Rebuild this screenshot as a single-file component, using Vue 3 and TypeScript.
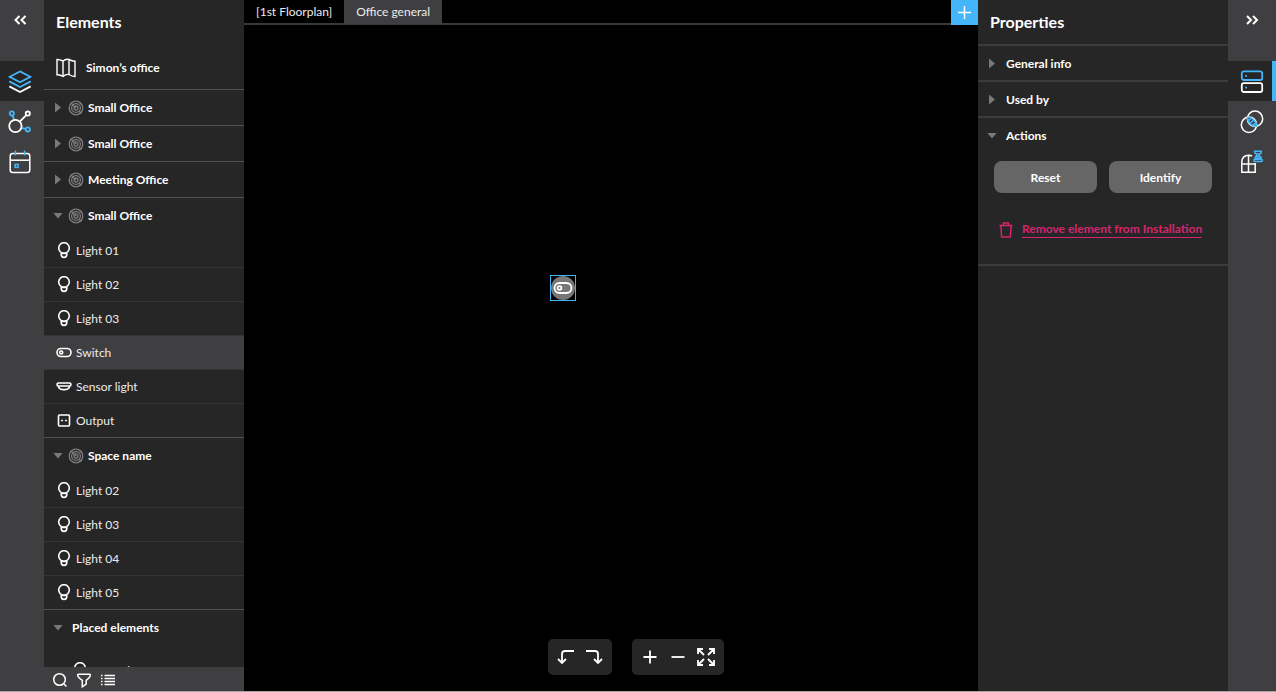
<script setup lang="ts">
import { ref } from 'vue'

type Kind = 'bulb' | 'switch' | 'sensor' | 'output'
interface Item { id: number; label: string; kind: Kind }
interface Group { id: number; label: string; space: boolean; open: boolean; nested?: boolean; items: Item[] }

const groups = ref<Group[]>([
  { id: 1, label: 'Small Office', space: true, open: false, items: [] },
  { id: 2, label: 'Small Office', space: true, open: false, items: [] },
  { id: 3, label: 'Meeting Office', space: true, open: false, items: [] },
  {
    id: 4, label: 'Small Office', space: true, open: true,
    items: [
      { id: 11, label: 'Light 01', kind: 'bulb' },
      { id: 12, label: 'Light 02', kind: 'bulb' },
      { id: 13, label: 'Light 03', kind: 'bulb' },
      { id: 14, label: 'Switch', kind: 'switch' },
      { id: 15, label: 'Sensor light', kind: 'sensor' },
      { id: 16, label: 'Output', kind: 'output' },
    ],
  },
  {
    id: 5, label: 'Space name', space: true, open: true,
    items: [
      { id: 21, label: 'Light 02', kind: 'bulb' },
      { id: 22, label: 'Light 03', kind: 'bulb' },
      { id: 23, label: 'Light 04', kind: 'bulb' },
      { id: 24, label: 'Light 05', kind: 'bulb' },
    ],
  },
  {
    id: 6, label: 'Placed elements', space: false, open: true, nested: true,
    items: [{ id: 31, label: 'Legend', kind: 'bulb' }],
  },
])

const selected = ref(14)
const activeTab = ref(1)
const tabs = ['[1st Floorplan]', 'Office general']
const sections = ref([
  { label: 'General info', open: false },
  { label: 'Used by', open: false },
  { label: 'Actions', open: true },
])
</script>

<template>
  <svg class="defs" aria-hidden="true">
    <symbol id="bulb" viewBox="0 0 16 18">
      <circle cx="8" cy="6" r="5.3" />
      <path d="M5.2 10.8V12.6A2.8 2.8 0 0 0 10.8 12.6V10.8M5.4 11.4H10.6" />
    </symbol>
    <symbol id="switch" viewBox="0 0 16 18">
      <rect x="1" y="4.5" width="14" height="8" rx="4" />
      <circle cx="5.2" cy="8.5" r="1.5" />
    </symbol>
    <symbol id="sensor" viewBox="0 0 16 18">
      <rect x="1" y="5" width="14" height="3" rx="1.5" />
      <path d="M2.2 8.2C3.6 12.8 12.4 12.8 13.8 8.2" />
    </symbol>
    <symbol id="output" viewBox="0 0 16 18">
      <rect x="2.5" y="3" width="11" height="11" rx="1" />
      <path d="M5.2 8.5H7M9 8.5H10.8" />
    </symbol>
    <symbol id="space" viewBox="0 0 16 16">
      <circle cx="8" cy="8" r="6.8" />
      <circle cx="8" cy="8" r="4.4" />
      <circle cx="8" cy="8" r="2" />
      <path d="M2.5 2.6L8 8M11 11.2L13.6 13.6M11.5 2.4L13.5 4.6" />
    </symbol>
  </svg>

  <div class="app">
    <nav class="rail left" aria-label="Views">
      <button class="collapse" aria-label="Collapse elements">
        <svg width="14" height="10" viewBox="0 0 14 10"><path d="M6.5 1L2.5 5L6.5 9M12.5 1L8.5 5L12.5 9" /></svg>
      </button>
      <button class="tool active" aria-label="Layers">
        <svg width="24" height="24" viewBox="0 0 24 24">
          <path class="blue" d="M12 1.4L22.3 6.8L12 12.3L1.7 6.8Z" />
          <path class="blue" d="M1.3 11.4L12 17L22.7 11.4" />
          <path d="M1.3 16.4L12 22L22.7 16.4" />
        </svg>
      </button>
      <button class="tool" aria-label="Connections">
        <svg width="24" height="24" viewBox="0 0 24 24">
          <path class="blue" d="M4.7 5.8L6.2 10.4M13.5 17.8L17.3 18.9" />
          <circle class="blue" cx="3.8" cy="3.4" r="2.1" />
          <circle class="blue" cx="19.8" cy="19.4" r="2.1" />
          <path d="M11.8 11.6L18 5.4" />
          <circle cx="19.8" cy="3.6" r="2.1" />
          <circle cx="7.4" cy="16" r="6.2" />
        </svg>
      </button>
      <button class="tool" aria-label="Schedule">
        <svg class="thin" width="24" height="24" viewBox="0 0 24 24">
          <rect x="2.2" y="3.6" width="19.6" height="18.8" rx="2.5" />
          <path d="M2.2 10.2H21.8" />
          <path class="blue" d="M7.4 0.5V5.5M16.6 0.5V5.5" />
          <rect class="blue" x="7.1" y="14.4" width="3" height="3" />
        </svg>
      </button>
    </nav>

    <aside class="elements">
      <h1>Elements</h1>
      <button class="project">
        <svg width="20" height="20" viewBox="0 0 20 20"><path d="M1 1.5Q4 1.5 7 3Q10 0.5 13 1.5Q16 3 19 3.2V18.5Q16 18.5 13 16.5Q10 15.8 7 18.5Q4 16.5 1 16.8ZM7 3V18.5M13 1.5V16.5" /></svg>
        <span>Simon’s office</span>
      </button>
      <div class="tree">
        <section v-for="group in groups" :key="group.id" class="group">
          <button class="group-head" :aria-expanded="group.open" @click="group.open = !group.open">
            <span class="caret" :class="{ open: group.open }"></span>
            <svg v-if="group.space" class="space" width="16" height="16"><use href="#space" /></svg>
            <span :class="{ plain: !group.space }">{{ group.label }}</span>
          </button>
          <ul v-if="group.open && group.items.length" :class="{ nested: group.nested }">
            <li v-for="item in group.items" :key="item.id">
              <button class="item" :class="{ selected: item.id === selected }" @click="selected = item.id">
                <svg width="16" height="18"><use :href="'#' + item.kind" /></svg>
                <span>{{ item.label }}</span>
              </button>
            </li>
          </ul>
        </section>
      </div>
      <footer>
        <button aria-label="Search">
          <svg width="16" height="16" viewBox="0 0 16 16"><circle cx="7.5" cy="7.5" r="5.8" /><path d="M11.7 11.7L14.5 14.5" /></svg>
        </button>
        <button aria-label="Filter">
          <svg width="16" height="16" viewBox="0 0 16 16"><path d="M2.5 2.2H13.5Q14.5 2.2 14.3 3.4Q14 5.5 10.2 8.4V12.2L6.3 14.8V8.4Q2 5.5 1.7 3.4Q1.5 2.2 2.5 2.2Z" /></svg>
        </button>
        <button aria-label="List">
          <svg width="16" height="16" viewBox="0 0 16 16"><path d="M4.5 3.5H15M4.5 6.5H15M4.5 9.5H15M4.5 12.5H15M1 3.5H2.5M1 6.5H2.5M1 9.5H2.5M1 12.5H2.5" /></svg>
        </button>
      </footer>
    </aside>

    <main>
      <div class="tabs" role="tablist">
        <button v-for="(tab, i) in tabs" :key="tab" class="tab" :class="{ current: i === activeTab }" role="tab" :aria-selected="i === activeTab" @click="activeTab = i">{{ tab }}</button>
        <button class="add" aria-label="Add floorplan">
          <svg width="14" height="14" viewBox="0 0 14 14"><path d="M6.5 0V13M0 6.5H13" /></svg>
        </button>
      </div>
      <div class="canvas">
        <button class="node" aria-label="Switch">
          <svg width="24" height="24" viewBox="0 0 24 24">
            <circle class="disc" cx="12" cy="12" r="12" />
            <rect x="3.5" y="7" width="17" height="10" rx="5" />
            <circle cx="8.5" cy="12" r="1.9" />
          </svg>
        </button>
        <div class="controls">
          <div class="bar">
            <button aria-label="Undo"><svg width="20" height="20" viewBox="0 0 20 20"><path d="M18 4H9Q6 4 6 7V16M2 12L6 16L10 12" /></svg></button>
            <button aria-label="Redo"><svg width="20" height="20" viewBox="0 0 20 20"><path d="M2 4H11Q14 4 14 7V16M10 12L14 16L18 12" /></svg></button>
          </div>
          <div class="bar">
            <button aria-label="Zoom in"><svg width="20" height="20" viewBox="0 0 20 20"><path d="M10 3.5V16.5M3.5 10H16.5" /></svg></button>
            <button aria-label="Zoom out"><svg width="20" height="20" viewBox="0 0 20 20"><path d="M3.5 10H16.5" /></svg></button>
            <button aria-label="Fit to screen"><svg width="20" height="20" viewBox="0 0 20 20"><path d="M2 7V2H7M2 2L8 8M13 2H18V7M18 2L12 8M2 13V18H7M2 18L8 12M18 13V18H13M18 18L12 12" /></svg></button>
          </div>
        </div>
      </div>
    </main>

    <aside class="properties">
      <h1>Properties</h1>
      <section v-for="section in sections" :key="section.label">
        <button class="section-head" :aria-expanded="section.open" @click="section.open = !section.open">
          <span class="caret" :class="{ open: section.open }"></span>
          <span>{{ section.label }}</span>
        </button>
        <div v-if="section.open && section.label === 'Actions'" class="actions">
          <div class="buttons">
            <button>Reset</button>
            <button>Identify</button>
          </div>
          <a class="remove" href="#">
            <svg width="14" height="16" viewBox="0 0 14 16"><path d="M0.5 3.5H13.5M4.5 3V1H9.5V3M2 4L2.5 14.2Q2.5 15 3.3 15H10.7Q11.5 15 11.5 14.2L12 4" /></svg>
            <span>Remove element from Installation</span>
          </a>
        </div>
      </section>
    </aside>

    <nav class="rail right" aria-label="Inspectors">
      <button class="collapse" aria-label="Collapse properties">
        <svg width="14" height="10" viewBox="0 0 14 10"><path d="M2 1L6 5L2 9M8 1L12 5L8 9" /></svg>
      </button>
      <button class="tool active" aria-label="Properties">
        <svg width="24" height="24" viewBox="0 0 24 24">
          <rect class="blue" x="1.8" y="1.4" width="20.4" height="8.6" rx="2" />
          <rect x="1.8" y="13.2" width="20.4" height="8.8" rx="2" />
          <path class="blue" d="M5.2 5.8H7M5.2 17.6H7" />
        </svg>
      </button>
      <button class="tool" aria-label="Relations">
        <svg class="thin" width="24" height="24" viewBox="0 0 24 24">
          <circle cx="15" cy="8.8" r="7.7" />
          <circle cx="9" cy="14.8" r="7.7" />
          <path class="blue" d="M7.6 7.4C12 6.8 17 11.8 16.4 16.2C12 16.8 7 11.8 7.6 7.4ZM8.5 10.8L11.2 8.2M10.2 13.4L13.6 10M12.6 15.6L15.8 12.5" />
        </svg>
      </button>
      <button class="tool" aria-label="Spaces">
        <svg class="thin" width="24" height="24" viewBox="0 0 24 24">
          <path d="M15.2 13V22.3H1.8V12Q2 5.5 8.5 5.2Q10.8 5.3 12 6.2M8.5 5.2V22.3M1.8 14H15.2" />
          <path class="blue" d="M14.6 1.2H21.4Q21.4 3.6 19.6 4H16.4Q14.6 3.6 14.6 1.2ZM16.6 4.5V6.3H19.4V4.5" />
          <rect class="blue" x="15" y="6.8" width="6.2" height="1.6" rx="0.8" />
          <rect class="blue" x="13.8" y="9.2" width="8.6" height="2.2" rx="1.1" />
        </svg>
      </button>
    </nav>
  </div>
</template>

<style>
body { margin: 0; background: #000; }
</style>

<style scoped>
.defs { position: absolute; width: 0; height: 0; }
.app {
  display: flex;
  box-sizing: border-box;
  height: 100vh;
  border-bottom: 1px solid #a5a5a5;
  overflow: hidden;
  color: #fff;
  font: 12px/18px Lato, sans-serif;
}
button {
  padding: 0;
  border: 0;
  background: none;
  color: inherit;
  font: inherit;
  text-align: left;
  cursor: pointer;
}
svg { display: block; flex: none; fill: none; stroke: #fff; stroke-width: 1.8; }
.thin { stroke-width: 1.5; }
.blue { stroke: #45b5fa; }

.rail { display: flex; flex: none; flex-direction: column; background: #3f3f41; }
.left { width: 44px; }
.right { width: 48px; }
.rail button { display: flex; align-items: center; }
.collapse { height: 39px; margin-bottom: 22px; }
.left .collapse { padding-left: 13px; }
.right .collapse { padding-left: 17px; }
.collapse svg { stroke-width: 2; }
.tool { box-sizing: border-box; height: 40px; padding: 1px 0 0 8px; }
.right .tool { padding-left: 12px; border-right: 4px solid transparent; }
.tool.active { background: #262626; }
.right .tool.active { border-right-color: #45b5fa; }

h1 { margin: 0; padding: 0 12px; font-size: 16px; line-height: 44px; font-weight: 700; }
.caret { flex: none; width: 6px; height: 10px; margin: 0 2px; background: #79797b; clip-path: polygon(0 0, 100% 50%, 0 100%); }
.caret.open { width: 10px; height: 6px; margin: 0; clip-path: polygon(0 0, 100% 0, 50% 100%); }

.elements { display: flex; flex: none; flex-direction: column; width: 200px; background: #262626; }
.project { display: flex; align-items: center; gap: 10px; height: 45px; padding: 2px 12px 0; box-sizing: border-box; font-weight: 700; }
.project svg { stroke-width: 1.4; }
.tree { flex: 1; min-height: 0; overflow: hidden; }
.group { border-top: 1px solid #505052; }
.group-head { display: flex; align-items: center; width: 100%; height: 35px; padding-left: 9px; font-weight: 700; }
.group-head .space { margin: 0 4px 0 5px; stroke: #7d7d7f; stroke-width: 1.3; }
.group-head .plain { margin-left: 9px; }
ul { margin: 0; padding: 0; list-style: none; }
li + li { border-top: 1px solid #343435; }
.item { display: flex; align-items: center; gap: 4px; box-sizing: border-box; width: 100%; height: 33px; padding-left: 12px; color: #ececec; }
li:first-child .item { height: 34px; padding-top: 1px; }
.item.selected { background: #3f3f41; }
.item svg { stroke-width: 1.6; }
.nested { padding: 8px 0 0 16px; }
footer { display: flex; align-items: center; gap: 8px; box-sizing: border-box; height: 24px; padding: 1px 8px 0; background: #3f3f41; }
footer svg { stroke-width: 1.5; }

main { display: flex; flex: 1; flex-direction: column; min-width: 0; background: #000; }
.tabs { display: flex; box-sizing: border-box; height: 25px; box-shadow: inset 0 -2px #39393b; }
.tab { height: 24px; padding: 0 12px; color: #ececec; }
.tab.current { background: #3f3f41; }
.add { display: flex; align-items: center; justify-content: center; width: 27px; height: 25px; margin-left: auto; background: #45b5fa; }
.add svg { stroke-width: 1.5; }
.canvas { position: relative; display: flex; flex: 1; flex-direction: column; justify-content: flex-end; }
.node { position: absolute; left: 306px; top: 250px; border: 1px solid #45b5fa; }
.node .disc { fill: #777; stroke: none; }
.controls { display: flex; justify-content: center; gap: 20px; padding: 0 0 16px 50px; }
.bar { display: flex; gap: 8px; padding: 8px; border-radius: 5px; background: #262626; }
.bar button { height: 20px; }

.properties { flex: none; width: 250px; background: #262626; }
.properties section { border-top: 2px solid #3c3c3d; }
.properties section:last-child { border-bottom: 2px solid #3c3c3d; }
.section-head { display: flex; align-items: center; gap: 9px; box-sizing: border-box; width: 100%; height: 34px; padding: 1px 9px 0; font-weight: 700; }
.actions { padding: 9px 16px 26px; }
.buttons { display: grid; grid-template-columns: 1fr 1fr; gap: 12px; }
.buttons button { height: 32px; padding-top: 1px; border-radius: 8px; background: #666; font-weight: 700; text-align: center; }
.remove { display: flex; align-items: center; gap: 9px; margin-top: 28px; padding-left: 5px; color: #d6246f; font-weight: 700; text-decoration: none; }
.remove svg { stroke: #d6246f; stroke-width: 1.5; }
.remove span { border-bottom: 1px solid #d6246f; line-height: 16px; white-space: nowrap; }
</style>
